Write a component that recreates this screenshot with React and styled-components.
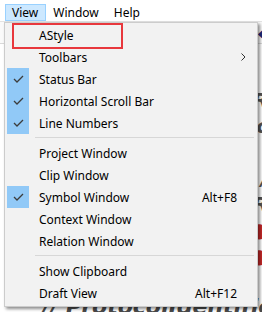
import React from "react";
import styled, { createGlobalStyle } from "styled-components";

const GlobalStyle = createGlobalStyle`
  html, body { margin: 0; padding: 0; background: #fff; }
  body { font-family: "Noto Sans", "Segoe UI", sans-serif; }
`;

const Page = styled.div`
  position: relative;
  width: 262px;
  height: 312px;
  overflow: hidden;
  display: flex;
  flex-direction: column;
  background: #fff;
`;

const MenuBar = styled.div`
  display: flex;
  align-items: flex-start;
  height: 22px;
  padding: 4px 0 0 5px;
  box-sizing: border-box;
  border-bottom: 1px solid #e3e3e3;
  background: #fff;
`;

const BarItem = styled.div`
  height: 17px;
  padding: 0 7px 0 6px;
  box-sizing: border-box;
  display: flex;
  align-items: center;
  font-size: 12px;
  color: #000;
  border: 1px solid ${(p) => (p.$open ? "#99d1ff" : "transparent")};
  background: ${(p) => (p.$open ? "#cce8ff" : "transparent")};
`;

const Toolbar = styled.div`
  height: 21px;
  border-bottom: 1px solid #d9d9d9;
  background: #fafafa;
  display: flex;
  justify-content: flex-end;
  align-items: center;
  overflow: hidden;
`;

const ToolGlyph = styled.span`
  margin-right: -4px;
  font-size: 10px;
  color: #1c2a7a;
`;

const Editor = styled.div`
  flex: 1;
  padding-top: 43px;
  font-family: "DejaVu Sans", sans-serif;
  font-weight: bold;
  font-style: italic;
  font-size: 20px;
  line-height: 26px;
  color: #555;
  white-space: nowrap;
  overflow: hidden;
`;

const CodeLine = styled.div`
  display: flex;
  justify-content: flex-end;
  height: 26px;
  margin-right: -6px;
  color: ${(p) => p.$color || "#555"};
`;

const Comment = styled.div`
  margin-top: -1px;
  padding-left: 42px;
  font-size: 22px;
  color: #4a4a4a;
`;

const Dropdown = styled.div`
  position: absolute;
  left: 4px;
  top: 22px;
  width: 254px;
  box-sizing: border-box;
  padding: 1px 2px 2px 2px;
  background: #f2f2f2;
  border: 1px solid #cccccc;
  box-shadow: 2px 2px 3px rgba(0, 0, 0, 0.45);
  font-size: 12px;
  color: #000;
`;

const Item = styled.div`
  position: relative;
  display: flex;
  align-items: center;
  height: 22px;
`;

const CheckCell = styled.div`
  width: 22px;
  height: 22px;
  display: flex;
  align-items: center;
  justify-content: center;
  background: ${(p) => (p.$checked ? "#91c9f7" : "transparent")};
`;

const Label = styled.span`
  flex: 1;
  padding-left: 10px;
`;

const Shortcut = styled.span`
  padding-right: 18px;
`;

const Arrow = styled.svg`
  margin-right: 9px;
`;

const Separator = styled.div`
  height: 1px;
  margin: 3px 1px 4px 28px;
  background: #d7d7d7;
`;

const Callout = styled.div`
  position: absolute;
  left: 7px;
  top: 0px;
  width: 111px;
  height: 26px;
  box-sizing: border-box;
  border: 2px solid #e8383d;
`;

const Check = () => (
  <svg width="11" height="8" viewBox="0 0 11 8">
    <path d="M1 4 L4 7 L10 1" fill="none" stroke="#3c3c3c" strokeWidth="1.3" />
  </svg>
);

const groups = [
  [
    { label: "AStyle" },
    { label: "Toolbars", sub: true },
    { label: "Status Bar", checked: true },
    { label: "Horizontal Scroll Bar", checked: true },
    { label: "Line Numbers", checked: true },
  ],
  [
    { label: "Project Window" },
    { label: "Clip Window" },
    { label: "Symbol Window", checked: true, key: "Alt+F8" },
    { label: "Context Window" },
    { label: "Relation Window" },
  ],
  [
    { label: "Show Clipboard" },
    { label: "Draft View", key: "Alt+F12" },
  ],
];

const code = [
  { text: "R" },
  { text: "c" },
  { text: "" },
  { text: "/" },
  { text: "R" },
  { text: "●", color: "#c62828" },
  { text: "●", color: "#c62828" },
  { text: "" },
];

export default function App() {
  return (
    <Page>
      <GlobalStyle />
      <MenuBar>
        <BarItem $open>View</BarItem>
        <BarItem>Window</BarItem>
        <BarItem>Help</BarItem>
      </MenuBar>
      <Toolbar>
        <ToolGlyph>◆</ToolGlyph>
      </Toolbar>
      <Editor>
        {code.map((l, i) => (
          <CodeLine key={i} $color={l.color}>
            {l.text}
          </CodeLine>
        ))}
        <Comment>// ProtocolIdentifier</Comment>
      </Editor>
      <Dropdown>
        {groups.map((g, gi) => (
          <React.Fragment key={gi}>
            {gi > 0 && <Separator />}
            {g.map((it) => (
              <Item key={it.label}>
                <CheckCell $checked={it.checked}>{it.checked && <Check />}</CheckCell>
                <Label>{it.label}</Label>
                {it.key && <Shortcut>{it.key}</Shortcut>}
                {it.sub && (
                  <Arrow width="5" height="8" viewBox="0 0 5 8">
                    <path d="M0.5 0.5 L4 4 L0.5 7.5" fill="none" stroke="#333" strokeWidth="1" />
                  </Arrow>
                )}
              </Item>
            ))}
          </React.Fragment>
        ))}
        <Callout />
      </Dropdown>
    </Page>
  );
}
